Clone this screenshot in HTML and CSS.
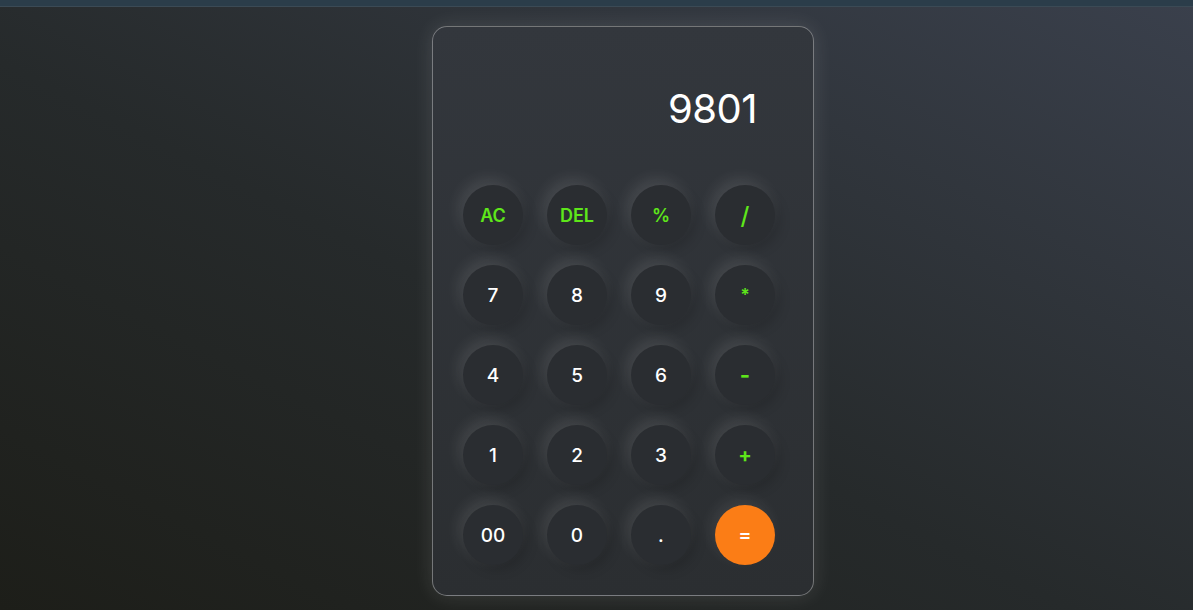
FILE: index.html
```html
<!DOCTYPE html>
<html>
<head>
<meta charset="utf-8">
<link rel="stylesheet" href="styles.css">
</head>
<body>
<div class="topbar"></div>
<main class="stage">
  <div class="calc">
    <div class="display">9801</div>
    <div class="keys">
      <button class="key op">AC</button>
      <button class="key op">DEL</button>
      <button class="key op">%</button>
      <button class="key op slash">/</button>
      <button class="key">7</button>
      <button class="key">8</button>
      <button class="key">9</button>
      <button class="key op small">*</button>
      <button class="key">4</button>
      <button class="key">5</button>
      <button class="key">6</button>
      <button class="key op minus">-</button>
      <button class="key">1</button>
      <button class="key">2</button>
      <button class="key">3</button>
      <button class="key op plus">+</button>
      <button class="key">00</button>
      <button class="key">0</button>
      <button class="key">.</button>
      <button class="key eq">=</button>
    </div>
  </div>
</main>
</body>
</html>
```

FILE: styles.css
```css
* { box-sizing: border-box; }
html, body { margin: 0; height: 100%; }
body {
  background: linear-gradient(to top right, #1d1e19 0%, #262a2b 45%, #3a404c 100%);
  font-family: Inter, "Open Sans", sans-serif;
  overflow: hidden;
  display: flex;
  flex-direction: column;
}
.topbar {
  height: 7px;
  background: #2b3d4a;
  border-bottom: 1px solid #3b4a55;
  flex: none;
}
.stage {
  flex: 1;
  display: flex;
  justify-content: center;
  padding-top: 19px;
  padding-left: 53px;
}
.calc {
  width: 382px;
  height: 570px;
  border: 1px solid rgba(255,255,255,0.35);
  border-radius: 15px;
  background: linear-gradient(to bottom, #33373d, #2b2e31);
  box-shadow: 0 0 20px rgba(255,255,255,0.12);
  padding: 0 36px 29px 30px;
  display: flex;
  flex-direction: column;
}
.display {
  height: 158px;
  display: flex;
  align-items: center;
  justify-content: flex-end;
  padding: 4px 20px 0 0;
  color: #fff;
  font-size: 40px;
  font-weight: 400;
  letter-spacing: -0.5px;
}
.keys {
  display: grid;
  grid-template-columns: repeat(4, 60px);
  column-gap: 24px;
  row-gap: 20px;
}
.key {
  width: 60px;
  height: 60px;
  border: none;
  border-radius: 50%;
  background: #2a2d31;
  color: #fff;
  font-family: inherit;
  font-size: 19px;
  font-weight: 500;
  box-shadow: -4px -6px 15px rgba(255,255,255,0.11), 5px 5px 12px rgba(0,0,0,0.15);
  padding: 0;
  display: flex;
  align-items: center;
  justify-content: center;
}
.key.op { color: #5ee61a; font-size: 18px; font-weight: 600; }
.key.slash { font-size: 24px; font-weight: 500; }
.key.small { font-size: 17px; }
.key.minus { font-size: 22px; font-weight: 700; }
.key.plus { font-size: 20px; font-weight: 700; }
.key.eq { background: #fb7d16; box-shadow: -4px -6px 15px rgba(255,255,255,0.08); font-size: 20px; }
```
